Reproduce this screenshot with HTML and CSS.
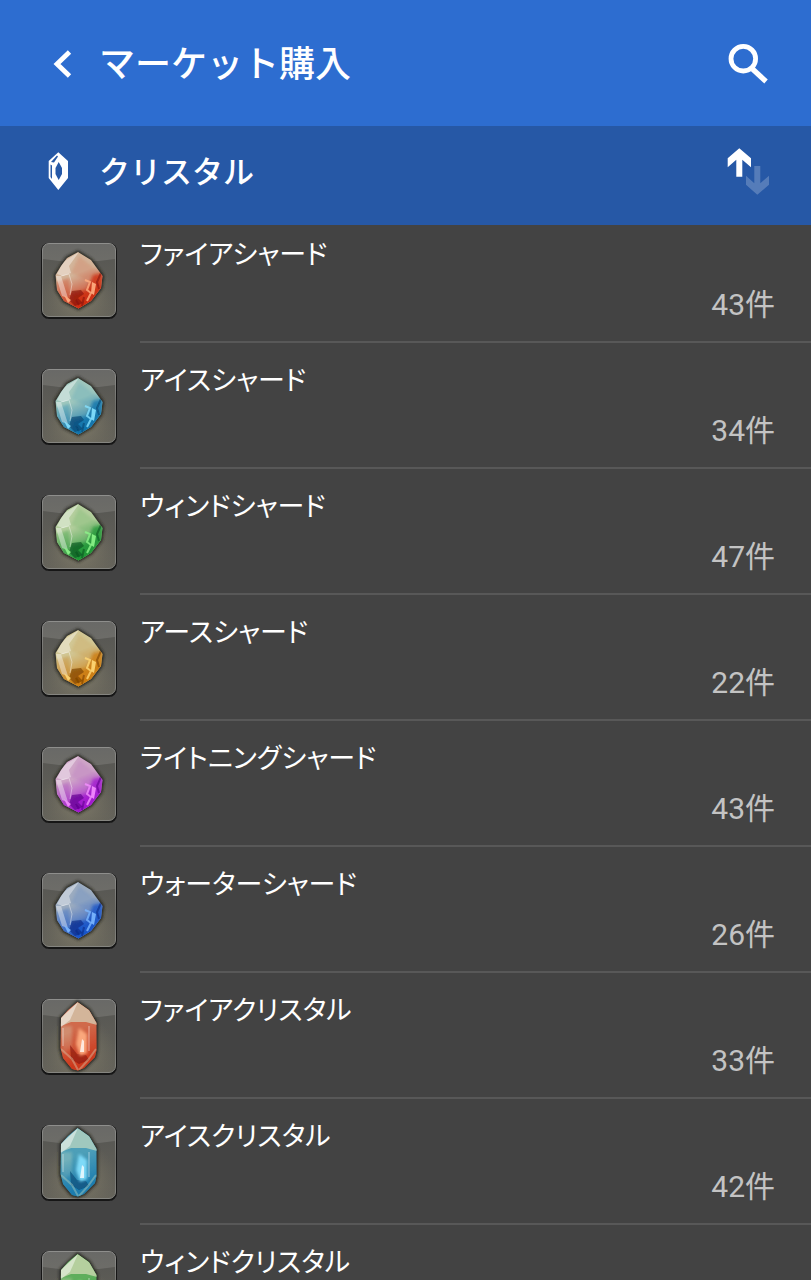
FILE: index.html
```html
<!DOCTYPE html>
<html lang="ja">
<head>
<meta charset="utf-8">
<meta name="viewport" content="width=device-width, initial-scale=1">
<title>マーケット購入</title>
<link rel="stylesheet" href="styles.css">
</head>
<body>
<svg class="defs" aria-hidden="true">
  <defs>
    <linearGradient id="frame-fill" x1="0" y1="0" x2="0" y2="1">
      <stop offset="0" stop-color="#555552"/><stop offset="1" stop-color="#66645b"/>
    </linearGradient>
    <radialGradient id="frame-glow" cx=".5" cy=".72" r=".5">
      <stop offset="0" stop-color="#8d8873" stop-opacity=".8"/><stop offset="1" stop-color="#77725f" stop-opacity="0"/>
    </radialGradient>
    <linearGradient id="frame-edge" x1="0" y1="0" x2="0" y2="1">
      <stop offset="0" stop-color="#8e8e8c"/><stop offset=".5" stop-color="#6e6e6a"/><stop offset="1" stop-color="#858580"/>
    </linearGradient>
    <linearGradient id="fade-down" x1=".3" y1="0" x2=".7" y2="1">
      <stop offset=".42" stop-color="#000"/><stop offset=".82" stop-color="#fff"/>
    </linearGradient>
    <mask id="lower" maskUnits="userSpaceOnUse" x="0" y="0" width="76" height="76">
      <rect width="76" height="76" fill="url(#fade-down)"/>
    </mask>
    <filter id="soft" x="-40%" y="-40%" width="180%" height="180%"><feGaussianBlur stdDeviation="1.5"/></filter>
    <filter id="hair" x="-20%" y="-20%" width="140%" height="140%"><feGaussianBlur stdDeviation=".6"/></filter>
    <clipPath id="shard-clip"><path d="M37 10 26 16 20 24 14.500 33 16 48 23 59 37.500 66.500 50 59 60 46 61.500 34 50 18Z"/></clipPath>
    <clipPath id="crystal-clip"><path d="M36.500 4 27 12 20 20 19.500 50 22 60 31 71 37 72.500 43 70 54 59 55.500 52V25L48 12Z"/></clipPath>

    <symbol id="frame" viewBox="0 0 76 77">
      <rect x="0" y="1" width="76" height="76" rx="8" fill="#181818" filter="url(#hair)"/>
      <rect x="1.500" y="1.500" width="73" height="73" rx="6.500" fill="url(#frame-fill)"/>
      <rect x="1.500" y="1.500" width="73" height="73" rx="6.500" fill="url(#frame-glow)" stroke="url(#frame-edge)"/>
      <path d="M2 8Q2 2 8 2H68Q74 2 74 8V17Q38 23 2 17Z" fill="#fff" opacity=".12"/>
    </symbol>

    <symbol id="shard" viewBox="0 0 76 77">
      <path d="M37 10 26 16 14.500 33 16 48 23 59 37.500 66.500 50 59 60 46 61.500 34 50 18Z" fill="#22221e" stroke="#22221e" stroke-width="3" filter="url(#soft)"/>
      <g filter="url(#hair)"><g clip-path="url(#shard-clip)">
        <rect width="76" height="76" fill="var(--pale)"/>
        <path d="M14 40 28 36 28 60 37 68H20Z" fill="var(--mid)" opacity=".5" filter="url(#soft)"/>
        <path d="M30 31 38 14 62 33 44 37Z" fill="var(--mid)" opacity=".25" filter="url(#soft)"/>
        <rect width="76" height="76" fill="var(--deep)" mask="url(#lower)"/>
        <path d="M52 33 62 31 60 48 50 60 39 67 31 62 30 52 46 48Z" fill="var(--deep)" opacity=".75" filter="url(#soft)"/>
        <path d="M31 49 40 48 43 52 37 56 42 61 34 64 28 58Z" fill="var(--dark)" opacity=".65" filter="url(#hair)"/>
        <path d="M15 34 20 34 27 56 21 54Z" fill="#fff" opacity=".4" filter="url(#hair)"/>
        <path d="M38 10 28 24 30 31 22 34 16 32 22 20Z" fill="#fff" opacity=".38" filter="url(#hair)"/>
        <path d="M44 38 49 40 46 48 50 51 46 59" fill="none" stroke="var(--glow)" stroke-width="2" opacity=".8" filter="url(#hair)"/>
        <path d="M51 40 55 42 53 53 50 51ZM23 53 30 58 27 61Z" fill="var(--glow)" opacity=".9" filter="url(#hair)"/>
        <path d="M60 31 56 40 58 47M43 55 41 64M35 58 38 63" fill="none" stroke="var(--dark)" stroke-width="2" opacity=".6" filter="url(#hair)"/>
        <path d="M20 34 28 32 31 42 29 53" fill="none" stroke="#fff" opacity=".4" filter="url(#hair)"/>
      </g></g>
    </symbol>

    <symbol id="crystal" viewBox="0 0 76 77">
      <path d="M36.500 4 20 20 19.500 50 22 60 31 71 37 72.500 43 70 54 59 55.500 52V25L48 12Z" fill="#22221e" stroke="#22221e" stroke-width="3" filter="url(#soft)"/>
      <g filter="url(#hair)"><g clip-path="url(#crystal-clip)">
        <rect width="76" height="76" fill="var(--mid)"/>
        <path d="M37 4 18 22V29L30 24H45L56 27V18Z" fill="var(--pale)"/>
        <path d="M19 28H31V50L22 56Z" fill="var(--pale)" opacity=".45" filter="url(#soft)"/>
        <rect width="76" height="76" fill="var(--deep)" opacity=".8" mask="url(#lower)"/>
        <path d="M37 4 29 22 20 29V19Z" fill="#fff" opacity=".45" filter="url(#hair)"/>
        <path d="M29 47 36 56 45 57 48 62 38 66 30 61Z" fill="var(--dark)" opacity=".6" filter="url(#hair)"/>
        <path d="M20 51 31 61 37 72M55 51 47 62 38 72" fill="none" stroke="var(--pale)" stroke-width="2" opacity=".5" filter="url(#hair)"/>
        <path d="M38 30 46 36 46 55 39 58 35 46Z" fill="var(--glow)" opacity=".9" filter="url(#soft)"/>
        <path d="M41 41 43 43 43 54 39 54Z" fill="#fff" opacity=".75" filter="url(#hair)"/>
        <path d="M22 30V48M48 28V53" fill="none" stroke="#fff" stroke-width="2" opacity=".25" filter="url(#hair)"/>
        <path d="M52 32V50" fill="none" stroke="var(--dark)" stroke-width="2" opacity=".3" filter="url(#hair)"/>
      </g></g>
    </symbol>
  </defs>
</svg>

<div class="app">
  <header class="bar bar-title">
    <button class="icon-button" type="button" aria-label="戻る">
      <svg width="44" height="44" viewBox="0 0 44 44"><path d="M33.500 11 21 23 33.500 35" fill="none" stroke="#fff" stroke-width="4.800"/></svg>
    </button>
    <h1 class="title">マーケット購入</h1>
    <button class="icon-button" type="button" aria-label="検索">
      <svg width="44" height="44" viewBox="0 0 44 44" fill="none" stroke="#fff"><circle cx="17.300" cy="17.700" r="12.300" stroke-width="4.800"/><path d="M26.500 28 40 40.500" stroke-width="5.200"/></svg>
    </button>
  </header>
  <div class="bar bar-category">
    <span class="category-icon">
      <svg width="44" height="44" viewBox="0 0 44 44"><path fill="#fff" fill-rule="evenodd" d="M22.300 3.300 32 12V29L22.300 41 12.700 29V12ZM22.700 13 19.500 19V25L22.700 31 26 25V19ZM14.500 15.500V28L16 30V16.500ZM15 13 21 6.500 22 7.500 18 13.500Z"/></svg>
    </span>
    <h2 class="category">クリスタル</h2>
    <button class="icon-button" type="button" aria-label="並べ替え">
      <svg width="44" height="48" viewBox="0 0 44 48"><path d="M13.300 1.300 25 11.300V20.300L16.300 12.800V29.700H10.300V12.800L1.700 20.300V11.300Z" fill="#fff"/><path d="M31.300 47.700 43 37.700V28.700L34.300 36.200V19H28.300V36.200L20 28.700V37.700Z" fill="#fff" opacity=".22"/></svg>
    </button>
  </div>
  <main class="content">
    <ul class="list">
      <li class="item fire"><svg class="thumb"><use href="#frame"/><use href="#shard"/></svg><div class="info"><span class="name">ファイアシャード</span><span class="count">43件</span></div></li>
      <li class="item ice"><svg class="thumb"><use href="#frame"/><use href="#shard"/></svg><div class="info"><span class="name">アイスシャード</span><span class="count">34件</span></div></li>
      <li class="item wind"><svg class="thumb"><use href="#frame"/><use href="#shard"/></svg><div class="info"><span class="name">ウィンドシャード</span><span class="count">47件</span></div></li>
      <li class="item earth"><svg class="thumb"><use href="#frame"/><use href="#shard"/></svg><div class="info"><span class="name">アースシャード</span><span class="count">22件</span></div></li>
      <li class="item lightning"><svg class="thumb"><use href="#frame"/><use href="#shard"/></svg><div class="info"><span class="name">ライトニングシャード</span><span class="count">43件</span></div></li>
      <li class="item water"><svg class="thumb"><use href="#frame"/><use href="#shard"/></svg><div class="info"><span class="name">ウォーターシャード</span><span class="count">26件</span></div></li>
      <li class="item fire"><svg class="thumb"><use href="#frame"/><use href="#crystal"/></svg><div class="info"><span class="name">ファイアクリスタル</span><span class="count">33件</span></div></li>
      <li class="item ice"><svg class="thumb"><use href="#frame"/><use href="#crystal"/></svg><div class="info"><span class="name">アイスクリスタル</span><span class="count">42件</span></div></li>
      <li class="item wind"><svg class="thumb"><use href="#frame"/><use href="#crystal"/></svg><div class="info"><span class="name">ウィンドクリスタル</span></div></li>
    </ul>
  </main>
</div>
</body>
</html>
```

FILE: styles.css
```css
* { box-sizing: border-box; }

body {
  margin: 0;
  background: #434343;
  color: #fff;
  font-family: Roboto, "Noto Sans CJK JP", sans-serif;
}

.defs { position: absolute; width: 0; height: 0; }

.app {
  display: flex;
  flex-direction: column;
  height: 100vh;
}

.bar {
  display: flex;
  align-items: center;
  flex: none;
  gap: 19px;
  padding: 0 41px 0 36px;
}
.bar-title { height: 126px; background: #2d6dd0; }
.bar-category { height: 99px; padding-bottom: 9px; background: #2658a6; }

.icon-button {
  display: flex;
  padding: 0;
  border: 0;
  background: none;
  cursor: pointer;
}
.category-icon { display: flex; }

.title, .category {
  flex: 1;
  margin: 0;
  padding-top: 3px;
  font-weight: 500;
}
.title { font-size: 36px; line-height: 48px; }
.category { font-size: 31px; line-height: 44px; }

.content {
  flex: 1;
  min-height: 0;
  overflow-y: auto;
  scrollbar-width: none;
}

.list {
  display: grid;
  gap: 9px;
  margin: 0;
  padding: 1px 0 0;
  list-style: none;
}

.item {
  display: flex;
  gap: 23px;
  height: 117px;
  padding-left: 41px;
}

.thumb { flex: none; width: 76px; height: 77px; margin-top: 16px; }

.info {
  display: flex;
  flex: 1;
  flex-direction: column;
  justify-content: space-between;
  padding: 11px 36px 16px 0;
  border-bottom: 2px solid #585858;
}
.name {
  font-size: 27px;
  line-height: 36px;
  font-feature-settings: "palt";
}
.count {
  align-self: flex-end;
  color: #c3c3c3;
  font-size: 30px;
  line-height: 40px;
}

.fire { --pale: #d3b59a; --mid: #d06a4c; --deep: #cc2c10; --dark: #85140a; --glow: #ffb083; }
.ice { --pale: #a0c8be; --mid: #4d9fb8; --deep: #0f72ac; --dark: #07456f; --glow: #86e2ff; }
.wind { --pale: #b5cf9e; --mid: #5fae5c; --deep: #1f9535; --dark: #0a5420; --glow: #8df58a; }
.earth { --pale: #d2c794; --mid: #c99a4c; --deep: #cc7a0e; --dark: #7a4204; --glow: #ffd978; }
.lightning { --pale: #cfa6c8; --mid: #b368bd; --deep: #a012cf; --dark: #5e058c; --glow: #f590ff; }
.water { --pale: #9cacc0; --mid: #527fc4; --deep: #1853c8; --dark: #0a2c85; --glow: #7db8ff; }
```
